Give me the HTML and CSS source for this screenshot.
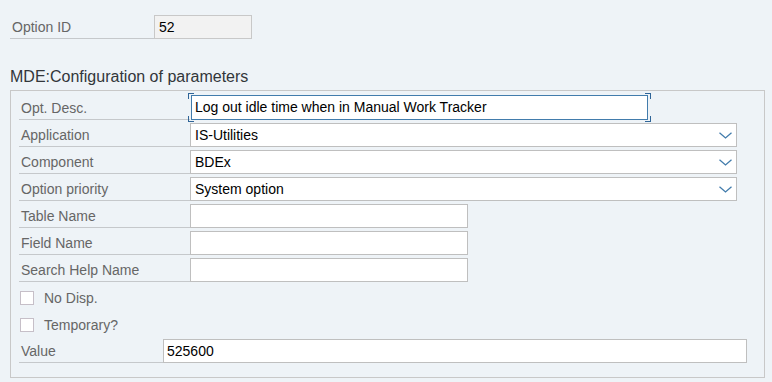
FILE: index.html
```html
<!DOCTYPE html>
<html>
<head>
<meta charset="utf-8">
<link rel="stylesheet" href="styles.css">
</head>
<body>
<div class="top-row">
  <div class="top-label">Option ID</div>
  <div class="top-box">52</div>
</div>
<div class="title">MDE:Configuration of parameters</div>
<div class="frame">
  <div class="row row-first">
    <div class="lbl">Opt. Desc.</div>
    <div class="inp inp-focus">Log out idle time when in Manual Work Tracker</div>
  </div>
  <div class="row">
    <div class="lbl">Application</div>
    <div class="inp inp-wide inp-select"><span>IS-Utilities</span>
      <svg class="chev" width="13" height="7" viewBox="0 0 13 7"><polyline points="0.5,0.8 6.5,6 12.5,0.8" fill="none" stroke="#427cac" stroke-width="1.3"/></svg>
    </div>
  </div>
  <div class="row">
    <div class="lbl">Component</div>
    <div class="inp inp-wide inp-select"><span>BDEx</span>
      <svg class="chev" width="13" height="7" viewBox="0 0 13 7"><polyline points="0.5,0.8 6.5,6 12.5,0.8" fill="none" stroke="#427cac" stroke-width="1.3"/></svg>
    </div>
  </div>
  <div class="row">
    <div class="lbl">Option priority</div>
    <div class="inp inp-wide inp-select"><span>System option</span>
      <svg class="chev" width="13" height="7" viewBox="0 0 13 7"><polyline points="0.5,0.8 6.5,6 12.5,0.8" fill="none" stroke="#427cac" stroke-width="1.3"/></svg>
    </div>
  </div>
  <div class="row">
    <div class="lbl">Table Name</div>
    <div class="inp inp-short"></div>
  </div>
  <div class="row">
    <div class="lbl">Field Name</div>
    <div class="inp inp-short"></div>
  </div>
  <div class="row">
    <div class="lbl">Search Help Name</div>
    <div class="inp inp-short"></div>
  </div>
  <div class="row row-check">
    <span class="cb"></span><span class="cb-text">No Disp.</span>
  </div>
  <div class="row row-check">
    <span class="cb"></span><span class="cb-text">Temporary?</span>
  </div>
  <div class="row">
    <div class="lbl lbl-short">Value</div>
    <div class="inp inp-value">525600</div>
  </div>
</div>
</body>
</html>
```
FILE: styles.css
```css
html, body {
  margin: 0;
  padding: 0;
  background: #eef3f7;
  font-family: "Liberation Sans", Arial, sans-serif;
  font-size: 14px;
  color: #000;
}

.top-row {
  display: flex;
  margin: 15px 0 0 10px;
  height: 24px;
}

.top-label {
  width: 144px;
  height: 24px;
  box-sizing: border-box;
  border-bottom: 1px solid #c5c8cb;
  color: #666;
  padding-left: 2px;
  line-height: 24px;
}

.top-box {
  width: 98px;
  height: 24px;
  box-sizing: border-box;
  border: 1px solid #c8c8c8;
  background: #f2f2f2;
  padding-left: 4px;
  line-height: 22px;
  color: #000;
}

.title {
  margin: 28px 0 0 10px;
  font-size: 16px;
  line-height: 20px;
  height: 20px;
  color: #32363a;
}

.frame {
  margin: 3px 7px 0 10px;
  width: 755px;
  box-sizing: border-box;
  border: 1px solid #c8c8c8;
  padding: 2px 0 14px 8px;
}

.row {
  display: flex;
  align-items: flex-end;
  height: 27px;
}

.lbl {
  width: 171px;
  height: 27px;
  box-sizing: border-box;
  border-bottom: 1px solid #c5c8cb;
  padding: 5px 0 0 2px;
  line-height: 20px;
  color: #666;
  flex: none;
}

.lbl-short {
  width: 144px;
}

.inp {
  height: 24px;
  box-sizing: border-box;
  border: 1px solid #bfbfbf;
  background: #fff;
  padding: 0 4px;
  line-height: 22px;
  color: #000;
  white-space: nowrap;
}

.inp-wide {
  width: 547px;
}

.inp-select {
  display: flex;
  align-items: center;
  justify-content: space-between;
}

.chev {
  margin-top: 1px;
}

.inp-short {
  width: 278px;
}

.inp-value {
  width: 584px;
  padding-left: 3px;
}

.inp-focus {
  position: relative;
  width: 457px;
  height: 25px;
  margin-left: 1px;
  padding-left: 3px;
  border-color: #427cac;
  line-height: 23px;
}

.inp-focus::before {
  content: "";
  position: absolute;
  top: -3px;
  bottom: -3px;
  left: -4px;
  right: -4px;
  background:
    linear-gradient(#2f6497, #2f6497) left top / 6px 1px no-repeat,
    linear-gradient(#2f6497, #2f6497) left top / 1px 6px no-repeat,
    linear-gradient(#2f6497, #2f6497) right top / 6px 1px no-repeat,
    linear-gradient(#2f6497, #2f6497) right top / 1px 6px no-repeat,
    linear-gradient(#2f6497, #2f6497) left bottom / 6px 1px no-repeat,
    linear-gradient(#2f6497, #2f6497) left bottom / 1px 6px no-repeat,
    linear-gradient(#2f6497, #2f6497) right bottom / 6px 1px no-repeat,
    linear-gradient(#2f6497, #2f6497) right bottom / 1px 6px no-repeat;
  pointer-events: none;
}

.row-check {
  align-items: center;
  padding-top: 4px;
  box-sizing: border-box;
}

.cb {
  width: 14px;
  height: 14px;
  box-sizing: border-box;
  border: 1px solid #c6bfc8;
  background: #fff;
  margin-left: 1px;
  flex: none;
}

.cb-text {
  margin-left: 10px;
  color: #666;
  line-height: 20px;
}
```
